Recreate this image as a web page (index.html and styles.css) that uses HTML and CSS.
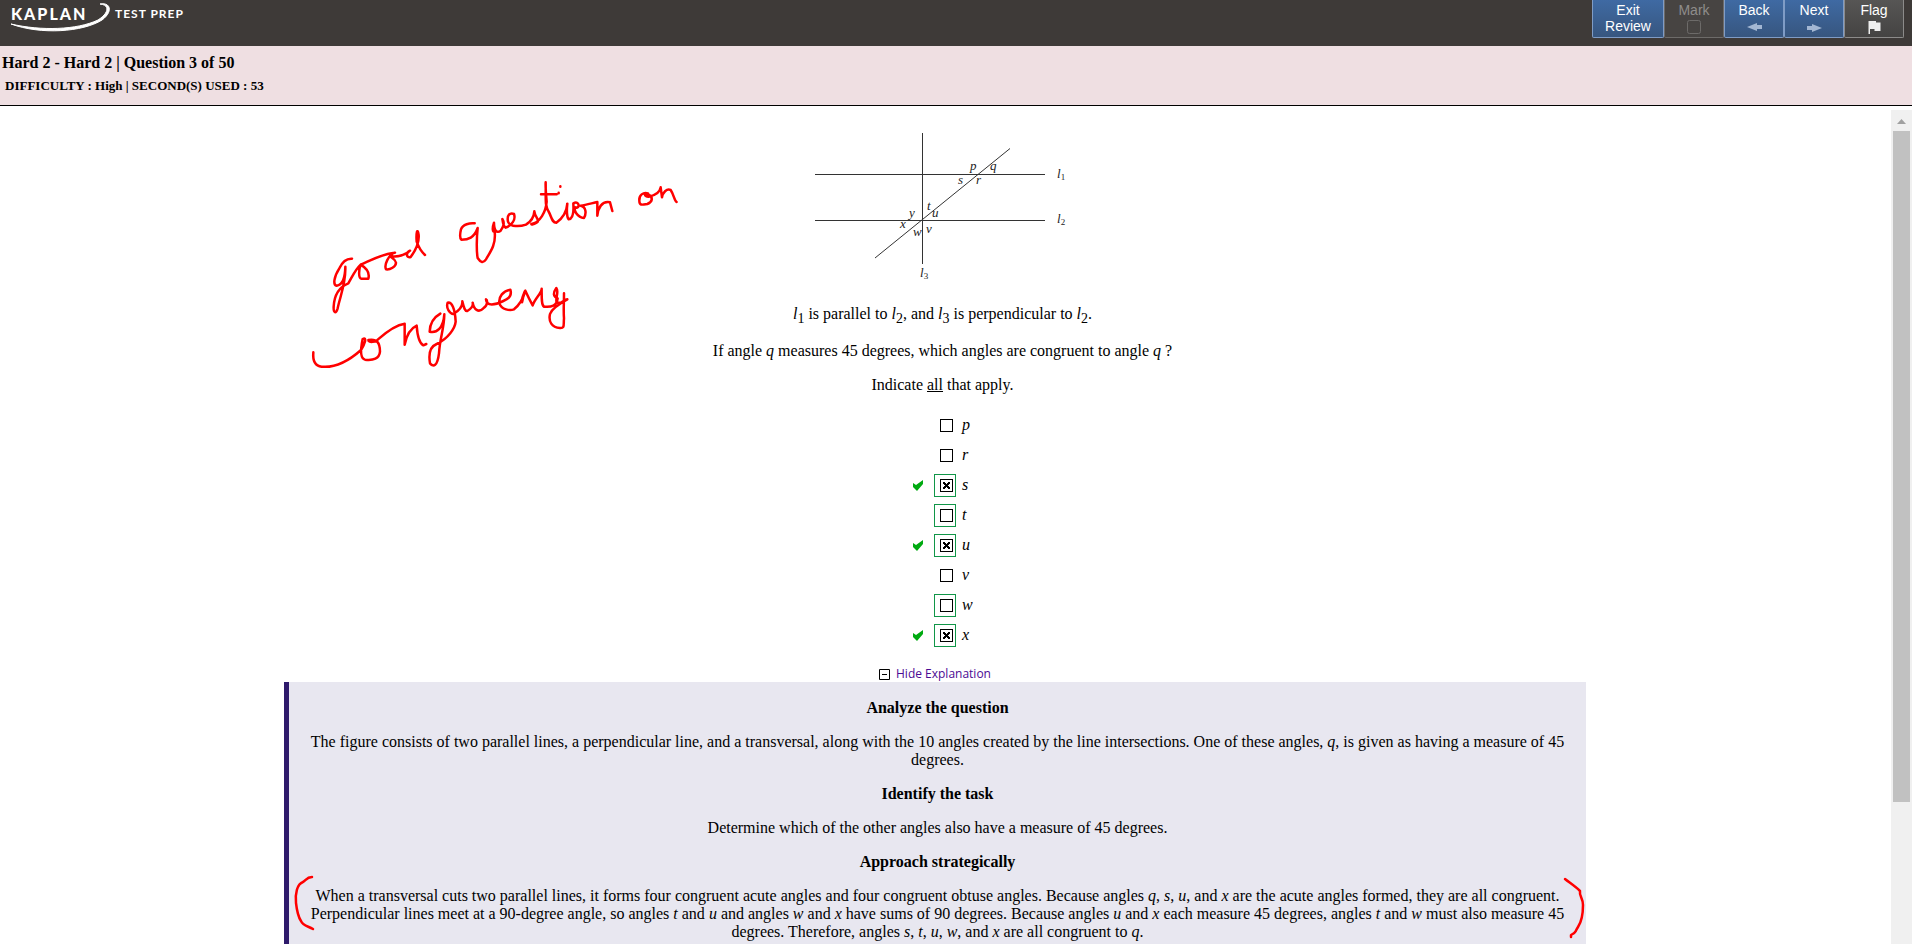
FILE: index.html
```html
<!DOCTYPE html>
<html lang="en">
<head>
<meta charset="utf-8">
<title>Kaplan Test Prep - Review</title>
<link rel="stylesheet" href="styles.css">
</head>
<body>
<header class="topbar">
  <div class="brand">
    <span class="brand-name">KAPLAN</span>
    <span class="brand-sub">TEST PREP</span>
    <svg class="swoosh" viewBox="0 0 104 34" width="104" height="34" aria-hidden="true"><path d="M89 4C100 2 102 12 91 20C72 32 30 35 0 24C30 31 66 30 87 20C98 13 99 5 89 4Z" fill="#fff" stroke="#fff"/></svg>
  </div>
  <nav class="actions" aria-label="Review controls">
    <button class="btn btn-exit"><span>Exit<br>Review</span></button>
    <button class="btn btn-mark" disabled>Mark<svg width="14" height="14" viewBox="0 0 14 14"><rect x=".5" y=".5" width="13" height="13" rx="2" fill="none" stroke="#6d6b69"/></svg></button>
    <button class="btn">Back<svg width="15" height="14" viewBox="0 0 15 14"><path d="M0 7L10 3V5H15V9H10V11Z" fill="#a3b7d3"/></svg></button>
    <button class="btn">Next<svg width="15" height="14" viewBox="0 0 15 14"><path d="M15 8L5 4V6H0V10H5V12Z" fill="#a3b7d3"/></svg></button>
    <button class="btn btn-flag">Flag<svg width="13" height="14" viewBox="0 0 13 14"><path d="M.5 1H8V2.500H12.500V11H6.500V9H2V14H.5Z" fill="#eee"/></svg></button>
  </nav>
</header>
<section class="status">
  <h1 class="status-title">Hard 2 - Hard 2 | Question 3 of 50</h1>
  <p class="status-meta">DIFFICULTY : High | SECOND(S) USED : 53</p>
</section>
<div class="viewport">
  <main class="question">
    <svg class="figure" width="270" height="150" viewBox="808 130 270 150" role="img" aria-label="Two parallel lines, a perpendicular line and a transversal">
      <g stroke="#333" fill="none"><path d="M815 174.500H1045M815 220.500H1045M922.500 133V264"/><path d="M875 258L1010 148.500"/></g>
      <g class="figure-text">
        <text x="970" y="170">p</text><text x="990" y="170">q</text><text x="958" y="184">s</text><text x="976" y="184">r</text>
        <text x="927" y="210">t</text><text x="932" y="217">u</text><text x="909" y="217">y</text><text x="900" y="228">x</text><text x="913" y="236">w</text><text x="926" y="233">v</text>
        <text x="1057" y="178">l<tspan class="num" dy="2">1</tspan></text><text x="1057" y="223">l<tspan class="num" dy="2">2</tspan></text><text x="920" y="277">l<tspan class="num" dy="2">3</tspan></text>
      </g>
    </svg>
    <p class="given"><i>l</i><sub>1</sub> is parallel to <i>l</i><sub>2</sub>, and <i>l</i><sub>3</sub> is perpendicular to <i>l</i><sub>2</sub>.</p>
    <p class="prompt">If angle <i>q</i> measures 45 degrees, which angles are congruent to angle <i>q</i> ?</p>
    <p class="hint">Indicate <u>all</u> that apply.</p>
    <ul class="options">
      <li class="option"><span class="tick"></span><span class="frame"><input type="checkbox" id="o-p"></span><label for="o-p">p</label></li>
      <li class="option"><span class="tick"></span><span class="frame"><input type="checkbox" id="o-r"></span><label for="o-r">r</label></li>
      <li class="option key"><span class="tick"><svg width="10" height="11" viewBox="0 0 10 11"><path d="M0 3L3 5L10 0V4L4 11L0 7Z" fill="#0a1"/></svg></span><span class="frame"><input type="checkbox" id="o-s" checked></span><label for="o-s">s</label></li>
      <li class="option key"><span class="tick"></span><span class="frame"><input type="checkbox" id="o-t"></span><label for="o-t">t</label></li>
      <li class="option key"><span class="tick"><svg width="10" height="11" viewBox="0 0 10 11"><path d="M0 3L3 5L10 0V4L4 11L0 7Z" fill="#0a1"/></svg></span><span class="frame"><input type="checkbox" id="o-u" checked></span><label for="o-u">u</label></li>
      <li class="option"><span class="tick"></span><span class="frame"><input type="checkbox" id="o-v"></span><label for="o-v">v</label></li>
      <li class="option key"><span class="tick"></span><span class="frame"><input type="checkbox" id="o-w"></span><label for="o-w">w</label></li>
      <li class="option key"><span class="tick"><svg width="10" height="11" viewBox="0 0 10 11"><path d="M0 3L3 5L10 0V4L4 11L0 7Z" fill="#0a1"/></svg></span><span class="frame"><input type="checkbox" id="o-x" checked></span><label for="o-x">x</label></li>
    </ul>
    <div class="review">
      <a class="toggle" href="#explanation"><svg width="11" height="11" viewBox="0 0 11 11"><path d="M.5 .5H10.500V10.500H.5ZM3 5.500H8" fill="none" stroke="#000"/></svg>Hide Explanation</a>
      <section class="explanation" id="explanation">
        <h2>Analyze the question</h2>
        <p>The figure consists of two parallel lines, a perpendicular line, and a transversal, along with the 10 angles created by the line intersections. One of these angles, <i>q</i>, is given as having a measure of 45 degrees.</p>
        <h2>Identify the task</h2>
        <p>Determine which of the other angles also have a measure of 45 degrees.</p>
        <h2>Approach strategically</h2>
        <p>When a transversal cuts two parallel lines, it forms four congruent acute angles and four congruent obtuse angles. Because angles <i>q</i>, <i>s</i>, <i>u</i>, and <i>x</i> are the acute angles formed, they are all congruent. Perpendicular lines meet at a 90-degree angle, so angles <i>t</i> and <i>u</i> and angles <i>w</i> and <i>x</i> have sums of 90 degrees. Because angles <i>u</i> and <i>x</i> each measure 45 degrees, angles <i>t</i> and <i>w</i> must also measure 45 degrees. Therefore, angles <i>s</i>, <i>t</i>, <i>u</i>, <i>w</i>, and <i>x</i> are all congruent to <i>q</i>.</p>
      </section>
    </div>
  </main>
  <div class="scrollbar" aria-hidden="true"><svg width="21" height="21" viewBox="0 0 21 21"><path d="M6 14L10.500 9L15 14Z" fill="#a0a0a0"/></svg><div class="thumb"></div></div>
</div>
<svg class="ink" width="1912" height="944" viewBox="0 0 1912 944" aria-hidden="true">
  <g transform="translate(290 170) scale(.33333)" stroke-width="7.500">
    <path d="M186 266C172 265 158 273 148 295C132 320 128 345 140 347C155 345 165 328 166 290C168 340 150 380 143 415C138 432 130 430 131 410C133 370 150 350 175 340C188 318 195 300 212 284C206 300 205 324 214 326H235C240 308 232 296 212 284C240 272 280 250 315 248C295 254 282 285 288 298C300 300 318 290 318 278C315 265 300 262 300 258C325 262 345 255 360 242C345 250 350 265 362 261C378 240 388 220 386 195C382 170 378 190 380 215C386 232 394 245 405 255"/>
    <path d="M554 160C540 158 518 163 513 178C509 195 510 205 514 209C535 209 552 204 563 174C560 200 559 245 563 264C572 278 580 280 588 268C605 240 618 220 614 185C608 188 606 175 612 158C612 180 620 192 632 182C640 170 645 160 637 147C640 160 638 168 647 173C665 165 678 150 672 132C660 127 650 135 654 155C660 172 690 170 708 164C722 155 732 140 733 124C734 140 752 152 740 158C730 163 725 165 724 162C750 158 768 125 770 95C768 70 766 50 767 37C768 80 764 110 775 123C785 140 785 158 799 158C818 145 830 125 832 101C830 120 830 140 836 148C855 146 850 110 850 100C870 90 870 118 856 112C850 120 862 142 882 144C890 130 888 110 872 107C890 105 910 98 922 96V137C924 115 935 92 960 97L967 123M753 73H800M806 70V68M811 50V49"/>
    <path d="M1074 70C1060 66 1046 75 1048 92C1048 108 1058 104 1072 102C1088 95 1090 82 1076 74C1060 66 1062 80 1076 80C1095 76 1110 66 1112 52L1116 82C1118 68 1130 55 1142 60C1152 75 1153 92 1160 96"/>
    <path d="M70 547C68 570 75 588 95 590C145 595 185 565 213 540C225 520 232 500 218 507C212 535 210 565 225 569C250 572 268 566 270 545C270 520 262 505 235 510C235 520 260 515 264 508C290 485 315 465 344 461V524C350 495 362 475 380 467C382 495 388 520 400 526L409 522"/>
    <path d="M451 431C435 440 420 455 419 485C440 490 460 475 463 433C462 480 450 500 447 550C442 590 430 592 420 580C415 550 420 530 440 522C475 505 495 475 497 455C495 415 485 395 473 398C467 415 480 432 490 432C510 420 518 405 517 394C522 415 525 424 532 423C545 415 550 405 548 398C552 418 565 430 580 415C595 405 592 390 588 388C590 410 615 405 640 393C662 385 665 372 661 359C640 362 625 380 628 400C635 420 660 422 672 418C688 405 700 385 706 362C700 375 694 385 696 397C700 385 700 368 706 362C712 375 722 395 728 406C735 385 755 370 755 356C755 380 754 405 762 410C785 412 800 408 803 385C790 380 788 370 799 354C808 365 795 385 800 398C820 402 815 390 832 388C810 400 785 415 780 432C775 455 785 472 810 474C825 475 820 465 822 445C820 420 822 405 822 370"/>
  </g>
  <g stroke-width="2.500">
    <path d="M312 877C307 877 306 880 303 882C297 884 295 894 296 903C297 912 299 918 301 921C303 926 308 926 313 929"/>
    <path d="M1565 879C1570 883 1575 886 1580 891C1579 896 1583 898 1583 905C1583 914 1582 921 1578 927C1574 933 1577 932 1571 935V937"/>
  </g>
</svg>
</body>
</html>
```
FILE: styles.css
```css
* { box-sizing: border-box; }
body {
  margin: 0;
  height: 100vh;
  display: flex;
  flex-direction: column;
  overflow: hidden;
  background: #fff;
  color: #000;
  font: 16px/18px "Liberation Serif", "Times New Roman", serif;
}
h1, h2, p, ul { margin: 0; padding: 0; }

.topbar {
  flex: none;
  height: 46px;
  padding: 0 8px 0 11px;
  display: flex;
  justify-content: space-between;
  background: #3e3a38;
}
.brand {
  position: relative;
  display: flex;
  gap: 17px;
  padding-top: 4px;
  color: #fff;
  font: 900 16px/20px Lato, sans-serif;
}
.brand-name { width: 87px; letter-spacing: 2px; }
.brand-sub { font-size: 12px; font-weight: bold; letter-spacing: 1px; }
.swoosh { position: absolute; left: 0; top: 0; }

.actions { display: flex; align-items: flex-start; }
.btn {
  width: 60px;
  height: 38px;
  padding: 2px 0 0;
  display: flex;
  flex-direction: column;
  align-items: center;
  border: 1px solid #7f9cc6;
  border-top: 0;
  border-radius: 0 0 2px 2px;
  background: linear-gradient(#3f6aa3, #37567f);
  color: #fff;
  font: 14px/16px "Liberation Sans", Arial, sans-serif;
}
.btn svg { margin-top: 2px; }
.btn-exit { width: 72px; }
.btn-mark { background: #474442; border-color: #6d6b69; color: #8f8d8b; }
.btn-flag { background: linear-gradient(#575655, #444342); border-color: #8c8b8a; }

.status {
  flex: none;
  height: 60px;
  padding: 8px 2px;
  border-bottom: 1px solid #000;
  background: #efdfe2;
}
.status-title { font-size: 16px; line-height: 18px; }
.status-meta { padding: 7px 3px; font-size: 13px; line-height: 14px; font-weight: bold; }

.viewport { flex: 1; min-height: 0; padding-top: 4px; display: flex; }
.question {
  flex: 1;
  overflow: hidden;
  padding: 20px 290px 0 284px;
  display: flex;
  flex-direction: column;
  align-items: center;
  text-align: center;
}
.figure { flex: none; }
.figure-text { font: italic 13px "Liberation Serif", serif; fill: #222; }
.num { font-style: normal; font-size: 9px; }
.given { margin-top: 24px; line-height: 20px; }
.given sub { line-height: 0; font-size: 14px; vertical-align: -4px; }
.prompt { margin-top: 18px; }
.hint { margin-top: 16px; }

.options { margin: 16px 0; list-style: none; }
.option {
  height: 30px;
  display: grid;
  grid-template-columns: 21px 28px 10px;
  align-items: center;
  font-style: italic;
  text-align: left;
}
.tick { display: flex; width: 10px; }
.frame {
  width: 22px;
  height: 23px;
  padding-right: 2px;
  display: flex;
  align-items: center;
  justify-content: flex-end;
  border: 1px solid transparent;
}
.key .frame { border-color: #109648; }
.frame input {
  appearance: none;
  width: 13px;
  height: 13px;
  margin: 0;
  display: grid;
  place-items: center;
  border: 1px solid #000;
  background: #fff;
}
.frame input:checked::before {
  content: "";
  width: 7px;
  height: 7px;
  background: linear-gradient(45deg, transparent 42%, #000 42%, #000 58%, transparent 58%),
    linear-gradient(-45deg, transparent 42%, #000 42%, #000 58%, transparent 58%);
}

.review { align-self: stretch; padding-right: 15px; }
.toggle {
  display: flex;
  align-items: center;
  justify-content: center;
  gap: 6px;
  height: 16px;
  color: #4b0a93;
  font: 12px/16px "Open Sans", sans-serif;
  text-decoration: none;
}
.explanation {
  padding: 17px 20px;
  border-left: 5px solid #2e1a6b;
  background: #e8e7f0;
}
.explanation h2 { font-size: 16px; line-height: 18px; }
.explanation p { margin: 16px 0; }

.scrollbar { width: 21px; display: flex; flex-direction: column; background: #f0f0f0; }
.scrollbar svg { flex: none; }
.thumb { height: 80.400%; margin: 0 2px; background: #c1c1c1; }

.ink {
  position: absolute;
  left: 0;
  top: 0;
  pointer-events: none;
  fill: none;
  stroke: #f00;
  stroke-linecap: round;
  stroke-linejoin: round;
}
```
